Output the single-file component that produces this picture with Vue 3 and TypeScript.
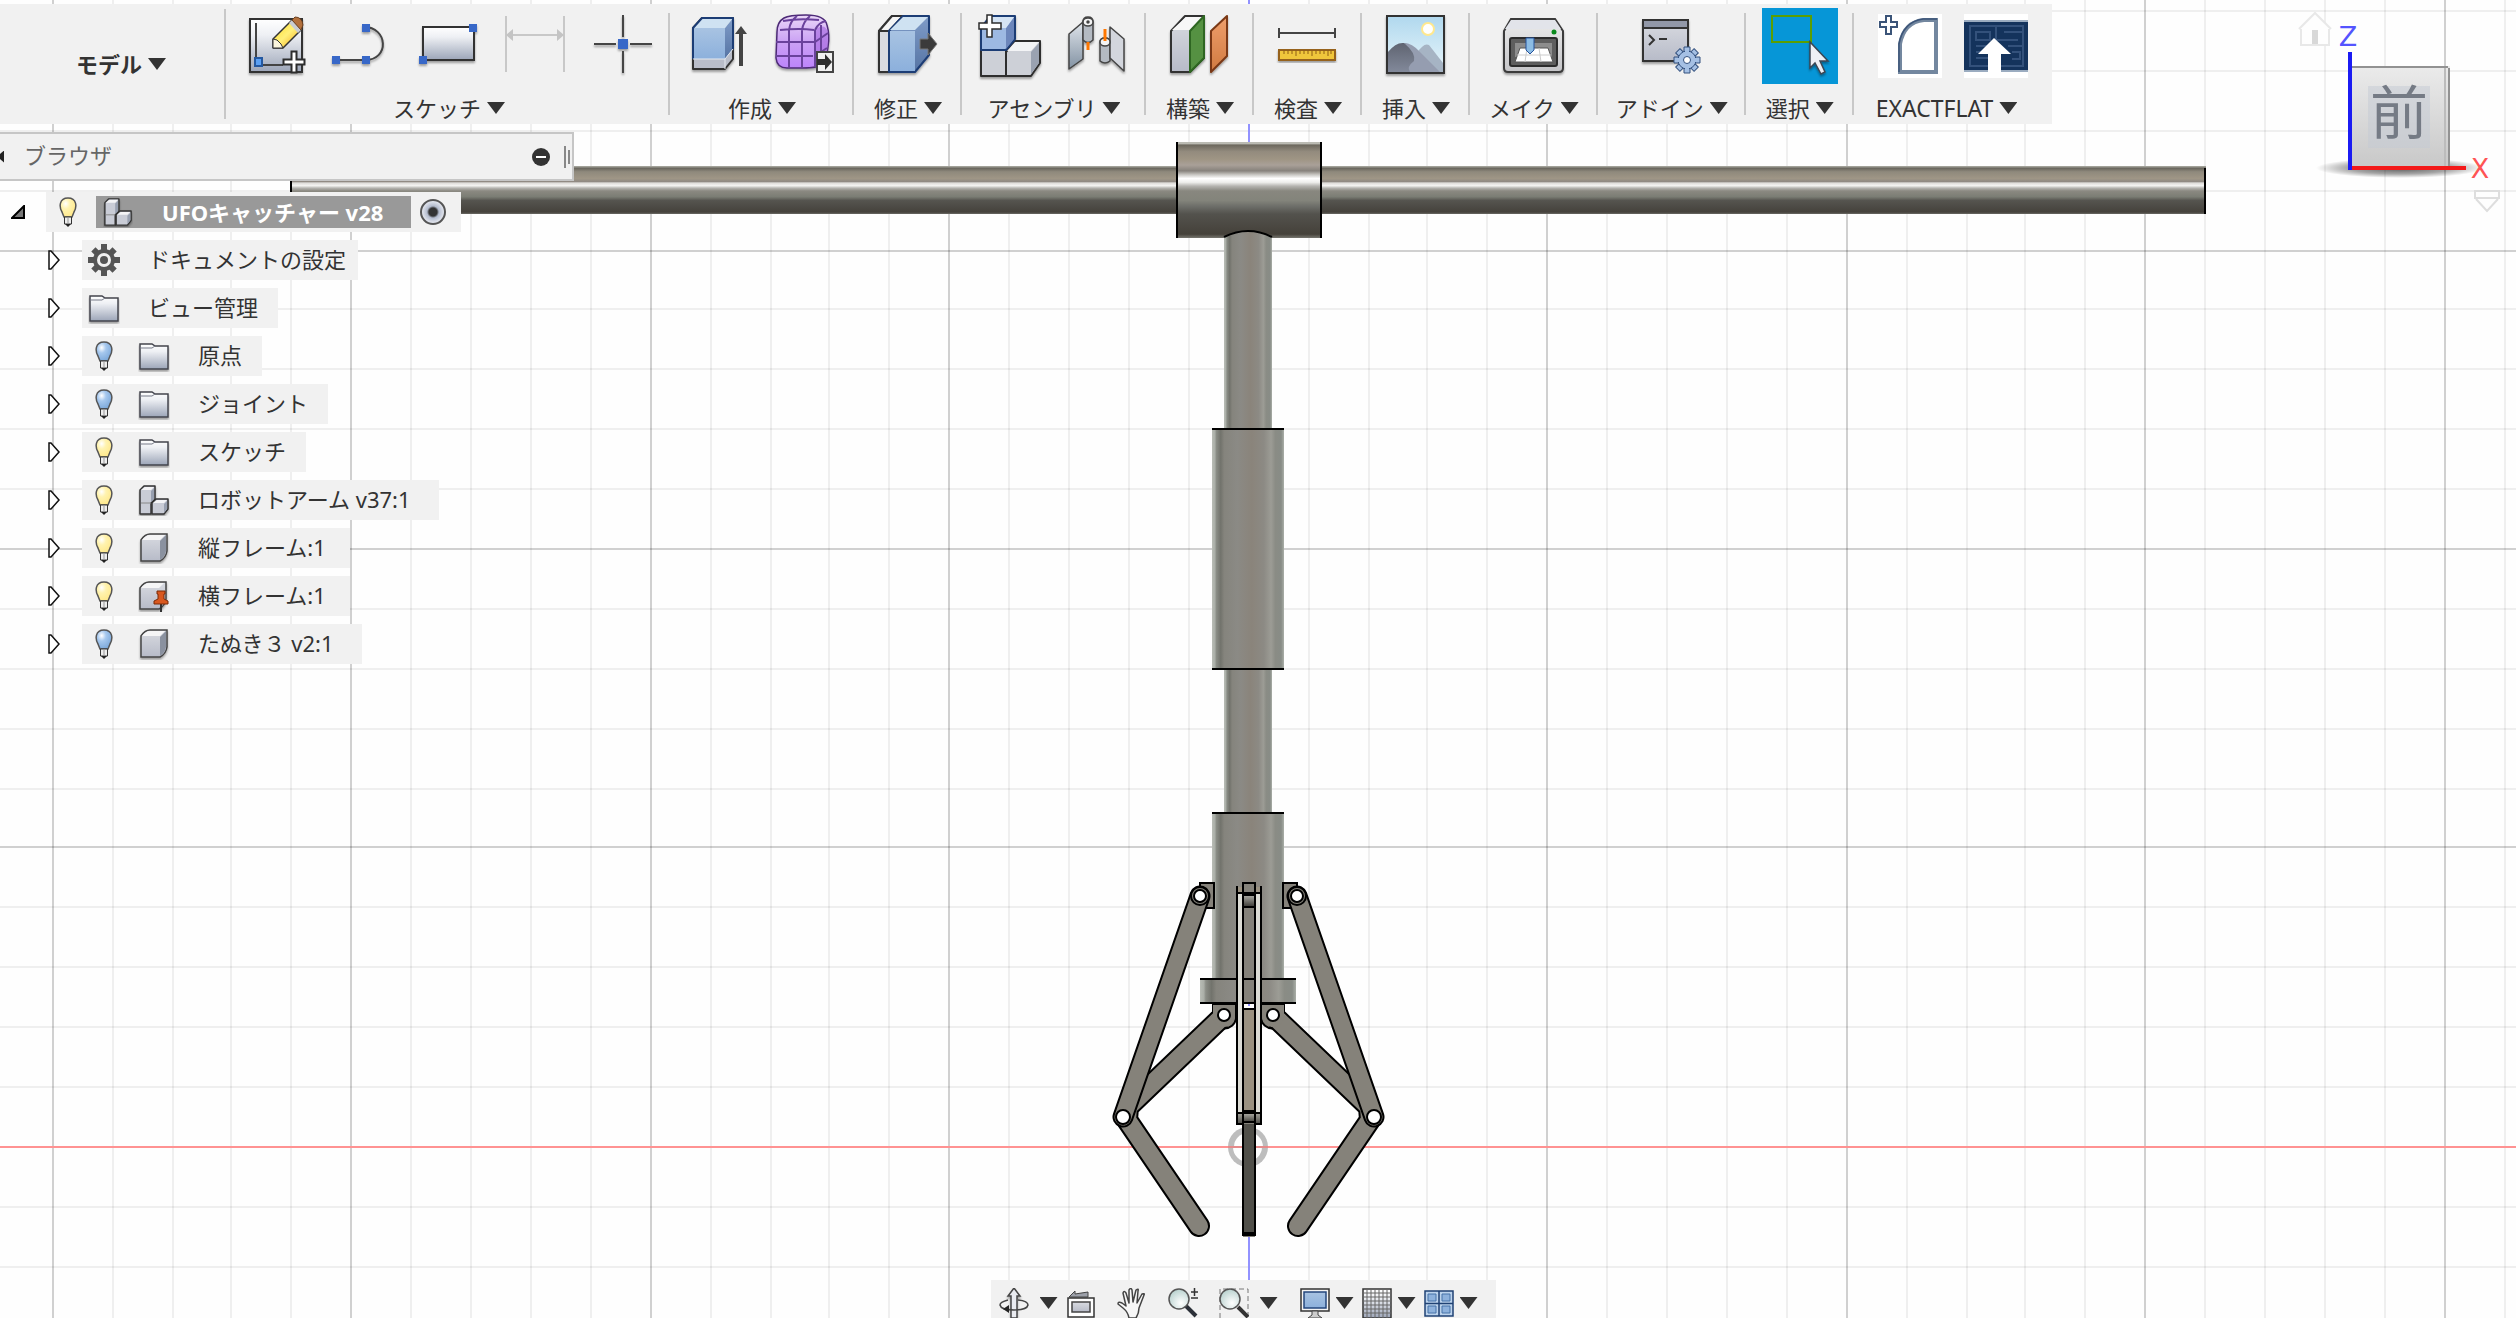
<script setup lang="ts">
interface ToolGroup {
  id: string
  label: string
  icons: { name: string; title: string; active?: boolean }[]
}

interface TreeNode {
  label: string
  bulb?: 'on' | 'off'
  icon: string
}

const groups: ToolGroup[] = [
  {
    id: 'sketch',
    label: 'スケッチ',
    icons: [
      { name: 'new-sketch', title: 'スケッチを作成' },
      { name: 'line', title: '線分' },
      { name: 'rectangle', title: '長方形' },
      { name: 'dimension', title: 'スケッチ寸法' },
      { name: 'point', title: '点' },
    ],
  },
  {
    id: 'create',
    label: '作成',
    icons: [
      { name: 'extrude', title: '押し出し' },
      { name: 'form', title: 'フォームを作成' },
    ],
  },
  { id: 'modify', label: '修正', icons: [{ name: 'press-pull', title: 'プレス/プル' }] },
  {
    id: 'assemble',
    label: 'アセンブリ',
    icons: [
      { name: 'new-component', title: '新規コンポーネント' },
      { name: 'joint', title: 'ジョイント' },
    ],
  },
  { id: 'construct', label: '構築', icons: [{ name: 'plane', title: 'オフセット平面' }] },
  { id: 'inspect', label: '検査', icons: [{ name: 'measure', title: '計測' }] },
  { id: 'insert', label: '挿入', icons: [{ name: 'decal', title: 'デカール' }] },
  { id: 'make', label: 'メイク', icons: [{ name: 'print', title: '3Dプリント' }] },
  { id: 'addin', label: 'アドイン', icons: [{ name: 'script', title: 'スクリプトとアドイン' }] },
  { id: 'select', label: '選択', icons: [{ name: 'select', title: '選択', active: true }] },
  {
    id: 'exactflat',
    label: 'EXACTFLAT',
    icons: [
      { name: 'flat-new', title: 'New pattern' },
      { name: 'flat-export', title: 'Export pattern' },
    ],
  },
]

const nodes: TreeNode[] = [
  { label: 'ドキュメントの設定', icon: 'gear' },
  { label: 'ビュー管理', icon: 'folder' },
  { label: '原点', bulb: 'off', icon: 'folder' },
  { label: 'ジョイント', bulb: 'off', icon: 'folder' },
  { label: 'スケッチ', bulb: 'on', icon: 'folder' },
  { label: 'ロボットアーム v37:1', bulb: 'on', icon: 'assembly' },
  { label: '縦フレーム:1', bulb: 'on', icon: 'body' },
  { label: '横フレーム:1', bulb: 'on', icon: 'pinned' },
  { label: 'たぬき３ v2:1', bulb: 'off', icon: 'body' },
]

const navTools = [
  { name: 'orbit', title: 'オービット', menu: true, id: 'orbit' },
  { name: 'look-at', title: 'ビュー正面', menu: false, id: 'look' },
  { name: 'pan', title: '画面移動', menu: false, id: 'pan' },
  { name: 'zoom', title: 'ズーム', menu: false, id: 'zoom' },
  { name: 'zoom-window', title: '窓ズーム', menu: true, id: 'fit' },
  { name: 'display', title: '表示設定', menu: true, id: 'display' },
  { name: 'grid', title: 'グリッドとスナップ', menu: true, id: 'grid' },
  { name: 'viewports', title: 'ビューポート', menu: true, id: 'views' },
]

// The ground grid repeats every ten cells; every fifth line is a major one.
const cellOffsets = [0, 60, 120, 178, 238, 298, 358, 418, 478, 538]
const columns = [53, 651, 1249, 1847, 2445].flatMap((start) =>
  cellOffsets.map((offset, i) => ({ at: start + offset, major: i % 5 === 0 })),
).filter((c) => c.at < 2516 && c.at !== 1249)
const rows = [
  11, 71, 131, 191, 251, 309, 369, 429, 489, 549, 609, 669, 729, 789, 847, 907, 967, 1027, 1087, 1207, 1267,
].map((at) => ({ at, major: at === 251 || at === 549 || at === 847 }))
</script>

<template>
  <div class="app">
    <svg class="defs" width="0" height="0" aria-hidden="true">
      <defs>
        <linearGradient id="g-paper" x1="0" y1="0" x2="0" y2="1"><stop offset="0" stop-color="#fff" /><stop offset=".3" stop-color="#eef0f4" /><stop offset="1" stop-color="#9ca5b8" /></linearGradient>
        <linearGradient id="g-grey" x1="0" y1="0" x2="0" y2="1"><stop offset="0" stop-color="#d9dbe1" /><stop offset="1" stop-color="#b7bbc8" /></linearGradient>
        <linearGradient id="g-blue" x1="0" y1="0" x2="0" y2="1"><stop offset="0" stop-color="#a8c3e2" /><stop offset="1" stop-color="#8cb0dc" /></linearGradient>
        <linearGradient id="g-side" x1="0" y1="0" x2="0" y2="1"><stop offset="0" stop-color="#7f9cc8" /><stop offset="1" stop-color="#5674a4" /></linearGradient>
        <linearGradient id="g-purple" x1="0" y1="0" x2="0" y2="1"><stop offset="0" stop-color="#ead7f8" /><stop offset=".5" stop-color="#cba2f4" /><stop offset="1" stop-color="#bd84fb" /></linearGradient>
        <linearGradient id="g-steel" x1="0" y1="0" x2="0" y2="1"><stop offset="0" stop-color="#dfe4ea" /><stop offset="1" stop-color="#8292a3" /></linearGradient>
        <linearGradient id="g-orange" x1="0" y1="0" x2="0" y2="1"><stop offset="0" stop-color="#ef9f6c" /><stop offset="1" stop-color="#d07a41" /></linearGradient>
        <linearGradient id="g-sky" x1="0" y1="0" x2="0" y2="1"><stop offset="0" stop-color="#b0d8ee" /><stop offset="1" stop-color="#e9f6fb" /></linearGradient>
        <linearGradient id="g-hill" x1="0" y1="0" x2="0" y2="1"><stop offset="0" stop-color="#5f6471" /><stop offset="1" stop-color="#82899a" /></linearGradient>
        <linearGradient id="g-pencil" x1="0" y1="0" x2="1" y2="1"><stop offset="0" stop-color="#ffd817" /><stop offset=".5" stop-color="#fff07a" /><stop offset="1" stop-color="#f29f05" /></linearGradient>
        <linearGradient id="g-case" x1="0" y1="0" x2="0" y2="1"><stop offset="0" stop-color="#ececec" /><stop offset="1" stop-color="#c5c5c8" /></linearGradient>
        <radialGradient id="g-on" cx=".35" cy=".3" r=".7"><stop offset="0" stop-color="#fff" /><stop offset=".4" stop-color="#fff3b0" /><stop offset="1" stop-color="#ffe98c" /></radialGradient>
        <radialGradient id="g-off" cx=".35" cy=".3" r=".7"><stop offset="0" stop-color="#fff" /><stop offset=".4" stop-color="#a6c8ee" /><stop offset="1" stop-color="#7eaadb" /></radialGradient>
        <radialGradient id="g-lens" cx=".6" cy=".7" r=".7"><stop offset="0" stop-color="#fff" /><stop offset="1" stop-color="#b9d2cf" /></radialGradient>
        <filter id="f-drop" x="-20%" y="-20%" width="140%" height="150%"><feDropShadow dx="0" dy="2" stdDeviation="1" flood-opacity=".35" /></filter>
      </defs>

      <symbol id="i-new-sketch" viewBox="0 0 76 76">
        <rect x="13" y="11" width="52" height="53" fill="url(#g-paper)" stroke="#333" stroke-width="2" filter="url(#f-drop)" />
        <path d="M19 15v42h27" fill="none" stroke="#444" stroke-width="2" />
        <rect x="18" y="50" width="7" height="8" fill="#5aa0f5" stroke="#2458a0" stroke-width="2" />
        <path d="M36 40v-9l19-19 10 9-19 19z" fill="url(#g-pencil)" stroke="#333" stroke-width="1.5" stroke-linejoin="round" />
        <path d="M36 40v-9l4 1 4 4 2 4z" fill="#fbf5dc" stroke="#333" /><path d="m52 15 9 10 4-4-10-9z" fill="#c9ccd2" />
        <path d="m55 12 3-3q7 0 8 8l-2 5z" fill="#b3703c" stroke="#6a3f1f" />
        <path d="M54.500 43.500h5v8h8v5h-8v8h-5v-8h-8v-5h8z" fill="#fff" stroke="#2d2d2d" stroke-width="2" />
      </symbol>
      <symbol id="i-line" viewBox="0 0 76 76">
        <g filter="url(#f-drop)"><path d="M12 52h29c25 0 23-33-1-33" fill="none" stroke="#444" stroke-width="2" /><path d="M8 48h8v8H8zM38 48h8v8h-8zM38 16h8v8h-8z" fill="#3767c8" /></g>
      </symbol>
      <symbol id="i-rectangle" viewBox="0 0 76 76">
        <g filter="url(#f-drop)"><rect x="12" y="19" width="51" height="33" fill="url(#g-paper)" stroke="#333" stroke-width="2" /><path d="M8 48h8v8H8zM58 16h8v8h-8z" fill="#3767c8" /></g>
      </symbol>
      <symbol id="i-dimension" viewBox="0 0 76 76"><path d="M8 8v56M66 8v56M12 27h50" fill="none" stroke="#c8c8c8" stroke-width="2" /><path d="m8 27 7-6v12zM66 27l-7-6v12z" fill="#c4c4c4" /></symbol>
      <symbol id="i-point" viewBox="0 0 76 76"><g filter="url(#f-drop)"><path d="M9 36h22M45 36h22M38 7v22M38 43v22" stroke="#444" stroke-width="2" /><rect x="33" y="31" width="10" height="10" fill="#3767c8" /></g></symbol>
      <symbol id="i-extrude" viewBox="0 0 76 76">
        <g filter="url(#f-drop)" stroke-linejoin="round"><path d="M12 20v41h32l8-10V10H21z" fill="#b9bdc9" stroke="#333" stroke-width="2" /><path d="M12 20h32v31H12z" fill="url(#g-blue)" /><path d="M44 20 52 10v31l-8 10z" fill="url(#g-side)" /><path d="M12 20 21 10h31l-8 10z" fill="#cfe2f2" /><path d="M12 51V20l9-10h31v31" fill="none" stroke="#1d3c75" stroke-width="2" /><path d="M12 51h32l8-10M44 51v10" fill="none" stroke="#e6eaf0" /></g>
        <path d="M60 58V24" stroke="#444" stroke-width="4" /><path d="m54 26 6-8 6 8z" fill="#444" />
      </symbol>
      <symbol id="i-form" viewBox="0 0 76 76">
        <g filter="url(#f-drop)"><path d="M10 24Q10 14 17 10q5-3 22-3 19 0 21 10 3 10 1 22-1 10-6 17-3 4-20 4H20Q10 60 9 50z" fill="url(#g-purple)" stroke="#4d2b77" stroke-width="1.500" /><path d="M47 22Q58 14 61 24q0 18-3 30l-10 4z" fill="#a86ce0" opacity=".65" /><path d="M9 34h39M9 48h37M13 22q20-2 34 0M22 22v37M35 22v37M48 22v37M16 13q15-3 36-1M22 22q1-9 8-14M35 22q1-8 8-14M48 22q4-8 11-9M48 34l13-9M48 48l12-8M54 17v38" fill="none" stroke="#6a429c" stroke-width="2" /></g>
        <rect x="50" y="44" width="16" height="20" fill="#f1f1f1" stroke="#444" stroke-width="2" /><path d="M50 51h8v-5l7 8-7 8v-5h-8z" fill="#2d2d2d" />
      </symbol>
      <symbol id="i-press-pull" viewBox="0 0 76 76">
        <g filter="url(#f-drop)" stroke-width="2" stroke-linejoin="round"><path d="M9 23 22 8h16L19 23v41H9z" fill="#d9dbe1" stroke="#333" /><path d="M9 23 22 8h11L19 23z" fill="#f5f5f5" stroke="#333" /><path d="M19 23v41h26l14-17V8H33z" fill="url(#g-side)" stroke="#1d3c75" /><path d="M20 23h25v40H20z" fill="url(#g-blue)" /><path d="M20 22 33 9h25L45 22z" fill="#cfe2f2" /></g>
        <path d="M50 31h8v-6l9 11-9 11v-6h-8z" fill="#3b3b3b" stroke="#777" />
      </symbol>
      <symbol id="i-new-component" viewBox="0 0 76 76">
        <g filter="url(#f-drop)" stroke-width="2" stroke-linejoin="round"><path d="M8 42h25v26H8z" fill="#cdd0d7" stroke="#2d2d2d" /><path d="M33 44 42 33h25v22L58 68H33z" fill="#cdd0d7" stroke="#2d2d2d" /><path d="m34 43 8-9h24l-8 9z" fill="#f3f4f6" /><path d="M58 44 66 35v20l-8 11z" fill="#9aa2b1" /><path d="M8 20 17 8h25v23l-9 11H8z" fill="#9db9e2" stroke="#1d3c75" /><path d="M33 20l8-11v22l-8 10z" fill="#6c86bb" /><path d="M9 20 18 9h23l-8 11z" fill="#d5e4f4" /></g>
        <path d="M14 7h5v8h9v6h-9v8h-5v-8H6v-6h8z" fill="#fff" stroke="#2d2d2d" stroke-width="1.500" />
      </symbol>
      <symbol id="i-joint" viewBox="0 0 76 76">
        <g filter="url(#f-drop)" stroke="#444" stroke-width="1.500" stroke-linejoin="round"><path d="m10 26 14-12v37L10 61z" fill="url(#g-steel)" /><path d="M24 14q0-5 5-5t5 5v18q-5 5-10 0z" fill="#b4bac2" /><ellipse cx="29" cy="14" rx="5" ry="4" fill="#f4f4f4" /><circle cx="29" cy="14" r="1" /><path d="M41 34q0-4 5-4t5 4v19q-5 4-10 0z" fill="#b4bac2" /><path d="m51 19 14 12v32L51 50z" fill="#d3d6dd" /><ellipse cx="46" cy="34" rx="5" ry="4" fill="#f4f4f4" /></g>
        <path d="M29 34v8M46 21v12" stroke="#f70" stroke-width="3" />
      </symbol>
      <symbol id="i-plane" viewBox="0 0 76 76">
        <g filter="url(#f-drop)" stroke-width="2" stroke-linejoin="round"><path d="M9 23 23 8h19v42L28 64H9z" fill="url(#g-grey)" stroke="#333" /><path d="M10 22 24 9h17L28 22z" fill="#f7f7f7" /><path d="M28 23 42 8v42L28 64z" fill="#549142" stroke="#2d6620" /><path d="M49 23 65 8v40L49 64z" fill="url(#g-orange)" stroke="#7a3814" /></g>
      </symbol>
      <symbol id="i-measure" viewBox="0 0 76 76"><path d="M9 20v10M65 20v10M9 25h56" fill="none" stroke="#444" stroke-width="2" /><rect x="9" y="42" width="56" height="10" fill="#f0c63a" stroke="#96621b" stroke-width="2" filter="url(#f-drop)" /><path d="M14 42v4M18 42v4M22 42v4M26 42v6M30 42v4M34 42v4M38 42v4M42 42v6M46 42v4M50 42v4M54 42v4M58 42v6M61 42v4" stroke="#8f5e16" /></symbol>
      <symbol id="i-decal" viewBox="0 0 76 76">
        <rect x="9" y="8" width="57" height="57" fill="url(#g-sky)" stroke="#333" stroke-width="2" filter="url(#f-drop)" /><circle cx="50" cy="21" r="6" fill="#fff" stroke="#ffe88e" stroke-width="2" /><path d="M38 46q8-12 13-9l14 18v9H38z" fill="#a6b4c4" /><path d="M10 44q8-10 16-9t13 12l22 17H10z" fill="url(#g-hill)" /><path d="M26 35q8 0 16 9l20 20H32q-4-5 4-11 2-8-10-18" fill="#959db0" />
      </symbol>
      <symbol id="i-print" viewBox="0 0 76 76">
        <g filter="url(#f-drop)"><path d="M15 11h44l8 12v37q0 4-4 4H12q-4 0-4-4V23z" fill="url(#g-case)" stroke="#3a3a3a" stroke-width="2" /><path d="M15 12h44l6 9H9z" fill="#e2e4ea" /></g>
        <rect x="14" y="30" width="47" height="28" rx="2" fill="#5e5e5e" stroke="#2c2c2c" stroke-width="2" /><path d="M19 35h37v14H19z" fill="#8d8d8d" /><path d="m24 40-5 14h38l-5-14z" fill="#fff" stroke="#555" /><path d="M21 47h34M31 40l-2 14M43 40l2 14" stroke="#ccc" /><path d="M30 30h8v12l-4 4-4-4z" fill="#8cbce4" stroke="#24529c" /><circle cx="58" cy="24" r="2.500" fill="#0a8a1c" />
      </symbol>
      <symbol id="i-script" viewBox="0 0 76 76">
        <rect x="9" y="12" width="45" height="41" fill="url(#g-grey)" stroke="#333" stroke-width="2" filter="url(#f-drop)" /><path d="M10 13h43v7H10z" fill="#9298a8" /><path d="M9 20h45" stroke="#333" stroke-width="2" /><path d="m15 27 5 5-5 5M25 31h8" fill="none" stroke="#333" stroke-width="2" />
        <g transform="translate(53 52)"><g fill="#a5c0e4" stroke="#33517f"><path d="M-3-13h6v26h-6zM-13-3h26v6h-26z" /><path d="M-3-13h6v26h-6zM-13-3h26v6h-26z" transform="rotate(45)" /><circle r="9" /></g><path d="M-2-12h4v24h-4zM-12-2h24v4h-24z" fill="#a5c0e4" /><circle r="3.500" fill="#fff" stroke="#33517f" /></g>
      </symbol>
      <symbol id="i-select" viewBox="0 0 76 76"><rect x="10" y="8" width="39" height="26" fill="none" stroke="#5b9e02" stroke-width="2" /><path d="M48 34v26l5-5 6 11 4-2-5-11h8z" fill="#eef0f5" stroke="#3b4653" stroke-width="1.500" filter="url(#f-drop)" /></symbol>
      <symbol id="i-flat-new" viewBox="0 0 76 76"><rect x="6" y="6" width="64" height="64" fill="#fff" /><path d="M64 12v52H28V36q4-22 24-24z" fill="none" stroke="#73879f" stroke-width="4" /><path d="M27 64V36q4-22 24-25h14" fill="none" stroke="#3b5478" stroke-width="1.500" /><path d="M14 8h5v6h6v5h-6v7h-5v-7H8v-5h6z" fill="#fff" stroke="#3b5478" stroke-width="2" /></symbol>
      <symbol id="i-flat-export" viewBox="0 0 76 76"><rect x="6" y="6" width="64" height="64" fill="#fff" /><rect x="6" y="12" width="64" height="52" fill="#14335c" /><path d="M6 13h64M6 63h64" stroke="#9bacc0" stroke-width="2" /><path d="M12 18h53v40H12zM18 24h14v8H18zM38 18v14h22M46 24h18M18 38h12M18 44h8M18 50h14M50 38h15M54 44h8v7h-8" fill="none" stroke="#33517b" stroke-width="2" /><path d="M36 30 53 46H43v20H30V46H20z" fill="#fff" /></symbol>

      <symbol id="i-bulb-on" viewBox="0 0 18 30"><path d="M9 1c9 0 9 9 6 14l-2 5H5l-2-5C0 10 0 1 9 1z" fill="url(#g-on)" stroke="#555" stroke-width="1.500" /><path d="M5.500 20h7v7h-7z" fill="#eee" stroke="#333" /><path d="M9 20v7" stroke="#999" /><path d="M6 27h6l-3 3z" fill="#222" /></symbol>
      <symbol id="i-bulb-off" viewBox="0 0 18 30"><path d="M9 1c9 0 9 9 6 14l-2 5H5l-2-5C0 10 0 1 9 1z" fill="url(#g-off)" stroke="#555" stroke-width="1.500" /><path d="M5.500 20h7v7h-7z" fill="#eee" stroke="#333" /><path d="M9 20v7" stroke="#999" /><path d="M6 27h6l-3 3z" fill="#222" /></symbol>
      <symbol id="i-gear" viewBox="0 0 32 32"><g fill="#555"><path d="M13 0h6v32h-6zM0 13h32v6H0z" /><path d="M13 1h6v30h-6zM1 13h30v6H1z" transform="rotate(45 16 16)" /><circle cx="16" cy="16" r="11" /></g><circle cx="16" cy="16" r="7" fill="#f1f1f1" /><circle cx="16" cy="16" r="4" fill="#555" /></symbol>
      <symbol id="i-folder" viewBox="0 0 32 32"><path d="M2 4h12l3 2h13v23H2z" fill="url(#g-paper)" stroke="#43454d" stroke-width="1.500" filter="url(#f-drop)" /><path d="M2 8h12l3-2" fill="none" stroke="#777b88" /></symbol>
      <symbol id="i-assembly" viewBox="0 0 32 32"><g filter="url(#f-drop)" stroke="#333" stroke-width="1.500" stroke-linejoin="round"><path d="M2 6 6 2h11v13l-4 4v11H2z" fill="#c9ccd6" /><path d="m14 19 4-4h12v10l-4 5H14z" fill="#c9ccd6" /></g><path d="M3 6 7 3h9l-3 3zM15 19l4-3h10l-3 3z" fill="#f4f4f6" /><path d="M13 7l3-3v11l-3 3zM26 20l3-3v8l-3 4z" fill="#98a0b0" /><path d="M3 19h10" stroke="#888" /></symbol>
      <symbol id="i-body" viewBox="0 0 32 32"><path d="M3 8q4-6 9-6h17v17q-1 7-7 10H3z" fill="url(#g-grey)" stroke="#444" stroke-width="1.500" filter="url(#f-drop)" /><path d="M4 8q4-5 8-5h15l-5 5z" fill="#f5f5f6" /><path d="m22 9 6-6v16q-1 6-6 9z" fill="#8a919f" /></symbol>
      <symbol id="i-pinned" viewBox="0 0 32 32"><path d="M2 8q4-6 9-6h17v17q-1 7-7 10H2z" fill="url(#g-grey)" stroke="#444" stroke-width="1.500" filter="url(#f-drop)" /><path d="M3 8q4-5 8-5h15l-5 5z" fill="#f5f5f6" /><path d="M23 24v8" stroke="#333" stroke-width="2" /><path d="M19 11h8v3h-1v5l4 2v3H16v-3l4-2v-5h-1z" fill="#d9581f" stroke="#7a2a08" /></symbol>

      <symbol id="i-orbit" viewBox="0 0 30 30"><g filter="url(#f-drop)"><path d="M12 30V8H9l6-8 6 8h-3v22z" fill="#e9ebf0" stroke="#444" stroke-width="1.500" /></g><path d="M9 12Q1 14 1 17q1 5 14 5t14-5q0-4-10-5" fill="none" stroke="#444" stroke-width="1.500" /><path d="m4 21 6-4v8z" fill="#222" /></symbol>
      <symbol id="i-look-at" viewBox="0 0 30 30"><path d="M3 9 9 3v3l13-2v5z" fill="#9da1aa" stroke="#444" /><rect x="2" y="10" width="26" height="19" fill="#fff" stroke="#333" stroke-width="1.500" /><rect x="6" y="14" width="18" height="10" fill="url(#g-grey)" stroke="#444" stroke-width="1.500" /></symbol>
      <symbol id="i-pan" viewBox="0 0 30 30"><path d="M12 30q-1-6-6-10l-5-4q0-3 4-1l4 3-3-13q1-3 3 0l3 10V2q2-3 3 0l1 12 3-12q3-2 2 1l-1 12 5-9q3-1 2 1l-5 13q0 5-3 10z" fill="#f7f7f7" stroke="#444" stroke-width="1.500" stroke-linejoin="round" /></symbol>
      <symbol id="i-zoom" viewBox="0 0 30 30"><path d="m18 18 10 10" stroke="#2b3038" stroke-width="4" /><circle cx="11" cy="11" r="10" fill="url(#g-lens)" stroke="#555" stroke-width="1.500" /><path d="M23 4h7M26.500 0v8M23 10h7" stroke="#333" stroke-width="1.500" /></symbol>
      <symbol id="i-zoom-window" viewBox="0 0 30 30"><path d="M1 30V1h28v29" fill="none" stroke="#777" stroke-dasharray="5 3" /><path d="m19 19 10 10" stroke="#333" stroke-width="4" /><circle cx="11" cy="11" r="10" fill="url(#g-lens)" stroke="#555" stroke-width="1.500" /></symbol>
      <symbol id="i-display" viewBox="0 0 30 30"><path d="M1 1h28v22H1z" fill="#f4f4f4" stroke="#333" stroke-width="1.500" /><path d="M4 4h22v16H4z" fill="url(#g-blue)" stroke="#24477e" stroke-width="1.500" /><path d="M12 23h6v4l4 3H8l4-3z" fill="#ccc" stroke="#444" /></symbol>
      <symbol id="i-grid" viewBox="0 0 30 30"><rect x="1" y="1" width="28" height="29" fill="url(#g-paper)" stroke="#333" stroke-width="1.500" /><path d="M5 1v29M9 1v29M13 1v29M17 1v29M21 1v29M25 1v29M1 5h28M1 9h28M1 13h28M1 17h28M1 21h28M1 25h28" stroke="#666" /></symbol>
      <symbol id="i-viewports" viewBox="0 0 30 30"><path d="M1 3h28v25H1z" fill="#bcd3ec" stroke="#1f4274" stroke-width="1.500" /><path d="M15 3v25M1 15.500h28" stroke="#1f4274" stroke-width="1.500" /><path d="M4 6h8v7H4zM18 6h8v7h-8zM4 18h8v7H4zM18 18h8v7h-8z" fill="#8db1dc" stroke="#4773a8" /></symbol>
    </svg>

    <!-- Modelling canvas -->
    <svg class="canvas" viewBox="0 0 2516 1318" preserveAspectRatio="xMidYMid slice" role="img" aria-label="モデル">
      <defs>
        <linearGradient id="m-beam" x1="0" y1="0" x2="0" y2="1">
          <stop offset="0" stop-color="#b0b0a8" /><stop offset=".05" stop-color="#6b685f" /><stop offset=".12" stop-color="#8f897c" /><stop offset=".26" stop-color="#9f9686" /><stop offset=".33" stop-color="#8f8983" /><stop offset=".35" stop-color="#dddbd8" /><stop offset=".41" stop-color="#f4f4f2" /><stop offset=".46" stop-color="#b5b4b0" /><stop offset=".52" stop-color="#8b8981" /><stop offset=".64" stop-color="#7b7d74" /><stop offset=".72" stop-color="#55544f" /><stop offset=".96" stop-color="#45423c" /><stop offset="1" stop-color="#6b6a65" />
        </linearGradient>
        <linearGradient id="m-hub" x1="0" y1="0" x2="0" y2="1">
          <stop offset="0" stop-color="#babab2" /><stop offset=".02" stop-color="#babab2" /><stop offset=".03" stop-color="#6b675c" /><stop offset=".1" stop-color="#938b7e" /><stop offset=".18" stop-color="#9f9584" /><stop offset=".24" stop-color="#a9a098" /><stop offset=".3" stop-color="#87827c" /><stop offset=".34" stop-color="#c8c6c2" /><stop offset=".38" stop-color="#fff" /><stop offset=".42" stop-color="#eeeeec" /><stop offset=".46" stop-color="#b4b3af" /><stop offset=".51" stop-color="#88877f" /><stop offset=".61" stop-color="#83847b" /><stop offset=".67" stop-color="#6d6e69" /><stop offset=".75" stop-color="#53524d" /><stop offset=".96" stop-color="#45413a" /><stop offset="1" stop-color="#77766f" />
        </linearGradient>
        <linearGradient id="m-shaft" x1="0" y1="0" x2="1" y2="0">
          <stop offset="0" stop-color="#b9bdb6" /><stop offset=".04" stop-color="#aaaea7" /><stop offset=".06" stop-color="#8a8d86" /><stop offset=".12" stop-color="#72736c" /><stop offset=".17" stop-color="#85847d" /><stop offset=".35" stop-color="#8b8a85" /><stop offset=".55" stop-color="#8a847b" /><stop offset=".72" stop-color="#8c8a84" /><stop offset=".82" stop-color="#9c9c95" /><stop offset=".88" stop-color="#8a8c85" /><stop offset=".96" stop-color="#888c86" /><stop offset="1" stop-color="#aaafa8" />
        </linearGradient>
        <linearGradient id="m-pin" x1="0" y1="0" x2="0" y2="1"><stop offset="0" stop-color="#a5a49d" /><stop offset="1" stop-color="#42413c" /></linearGradient>
        <g id="claw">
          <path d="M1200 883h14v25h-14z" fill="#85827a" stroke="#000" stroke-width="2" />
          <path d="M1213 1004v12a11 11 0 0 0 23 2v-14z" fill="#85827a" stroke="#000" stroke-width="2" />
          <g fill="none" stroke-linecap="round" stroke-linejoin="round">
            <path d="M1219 1020 1128 1107l-1 13 72 106" stroke="#000" stroke-width="22" />
            <path d="M1219 1020 1128 1107l-1 13 72 106" stroke="#85827a" stroke-width="18" />
            <path d="M1200 896 1123 1117" stroke="#000" stroke-width="21" />
            <path d="M1200 896 1123 1117" stroke="#85827a" stroke-width="17" />
          </g>
          <path d="M1213 1005v10a11 11 0 0 0 22 2v-12z" fill="#85827a" />
          <g fill="#fff" stroke="#000" stroke-width="2"><circle cx="1200" cy="896" r="9" fill="none" /><circle cx="1200" cy="896" r="6" /><circle cx="1224" cy="1015" r="6" /><circle cx="1123" cy="1117" r="7" /></g>
        </g>
      </defs>
      <rect width="2516" height="1318" fill="#fefefe" />
      <g stroke="#000" stroke-width="2">
        <line v-for="c in columns" :key="`c${c.at}`" :x1="c.at" :x2="c.at" y1="0" y2="1318" :stroke-opacity="c.major ? 0.18 : 0.06" />
        <line v-for="r in rows" :key="`r${r.at}`" x1="0" x2="2516" :y1="r.at" :y2="r.at" :stroke-opacity="r.major ? 0.18 : 0.06" />
      </g>
      <path d="M0 1147h2516" stroke="#ff9292" stroke-width="2" />
      <path d="M1249 0v1318" stroke="#9292ff" stroke-width="2" />
      <circle cx="1248" cy="1147" r="20" fill="#bdbdbd" />
      <path d="M1248 1147v-15a15 15 0 0 1 15 15zM1248 1147v15a15 15 0 0 1-15-15z" fill="#fefefe" />
      <circle cx="1248" cy="1147" r="14" fill="#fefefe" />
      <path d="M1228 1147h40" stroke="#e58a8a" stroke-width="2" />

      <rect x="290" y="166" width="1916" height="48" fill="url(#m-beam)" />
      <path d="M291 167v47M2205 168v46" stroke="#000" stroke-width="2" />
      <rect x="1176" y="142" width="146" height="96" fill="url(#m-hub)" />
      <path d="M1177 142v96M1321 142v96" stroke="#000" stroke-width="2" />
      <path d="M1224 237q24-12 48 0v576h-48z" fill="url(#m-shaft)" />
      <path d="M1224 237q24-12 48 0" fill="none" stroke="#000" stroke-width="2" />
      <rect x="1212" y="429" width="72" height="240" fill="url(#m-shaft)" />
      <rect x="1212" y="813" width="72" height="166" fill="url(#m-shaft)" />
      <rect x="1200" y="979" width="96" height="24" fill="url(#m-shaft)" />
      <path d="M1212 429h72M1212 669h72M1212 813h72M1200 979h96M1200 1003h96" stroke="#000" stroke-width="2" />
      <use href="#claw" />
      <use href="#claw" transform="matrix(-1 0 0 1 2497 0)" />

      <rect x="1237" y="887" width="24" height="6" fill="#9b9281" />
      <rect x="1237" y="893" width="24" height="220" fill="#dcdcd5" />
      <rect x="1237" y="1113" width="24" height="12" fill="url(#m-pin)" />
      <rect x="1243" y="883" width="12" height="354" fill="#85827a" />
      <rect x="1243" y="892" width="12" height="3" fill="#eee" />
      <rect x="1243" y="896" width="12" height="10" fill="url(#m-pin)" />
      <rect x="1243" y="1004" width="12" height="4" fill="#fff" />
      <path d="M1248 1005h2" stroke="#9292ff" stroke-width="2" />
      <rect x="1243" y="1010" width="12" height="101" fill="#9b9281" />
      <rect x="1243" y="1114" width="12" height="8" fill="url(#m-pin)" />
      <rect x="1243" y="1124" width="12" height="112" fill="#504f49" />
      <path d="M1237 886v239M1261 886v239M1243 882v354M1255 882v354M1243 883h12M1237 893h24M1243 895h12M1243 907h12M1243 979h12M1243 1003h12M1243 1009h12M1243 1111h12M1237 1113h24M1237 1124h6M1255 1124h6M1243 1122h12M1243 1233h12M1242 1235h14" fill="none" stroke="#000" stroke-width="2" />
    </svg>

    <header class="toolbar">
      <button class="workspace" type="button">モデル<span class="caret"></span></button>
      <section v-for="g in groups" :key="g.id" class="group" :class="`group-${g.id}`">
        <div class="icons">
          <button v-for="i in g.icons" :key="i.name" type="button" class="tool" :class="{ active: i.active }" :title="i.title" :aria-label="i.title">
            <svg width="76" height="76"><use :href="`#i-${i.name}`" /></svg>
          </button>
        </div>
        <button type="button" class="menu">{{ g.label }}<span class="caret"></span></button>
      </section>
    </header>

    <!-- View cube -->
    <svg class="cube" width="220" height="220" viewBox="0 0 220 220" role="img" aria-label="前">
      <defs>
        <linearGradient id="c-face" x1="0" y1="0" x2="0" y2="1"><stop offset="0" stop-color="#ebebeb" /><stop offset="1" stop-color="#c8c8c8" /></linearGradient>
        <radialGradient id="c-shadow"><stop offset="0" stop-opacity=".65" /><stop offset=".6" stop-opacity=".35" /><stop offset="1" stop-opacity="0" /></radialGradient>
      </defs>
      <path d="m3 29 16-16 16 16M5 29v16h28V29" fill="#fefefe" stroke="#e8e8e8" stroke-width="2" /><path d="M16 30h6v14h-6z" fill="#d8d8d8" />
      <ellipse cx="104" cy="168" rx="84" ry="10" fill="url(#c-shadow)" />
      <rect x="54" y="66" width="100" height="102" fill="url(#c-face)" />
      <path d="M54 67h98M153 68v98" stroke="#929292" stroke-width="2" />
      <path d="M149 68v98" stroke="#bcbcbc" stroke-width="2" />
      <rect x="72" y="86" width="62" height="62" fill="#c4c9d4" opacity=".5" />
      <text x="103" y="134" class="face" text-anchor="middle">前</text>
      <path d="M54 168h116" stroke="#f31919" stroke-width="4" /><path d="M54 52v118" stroke="#1b1bf3" stroke-width="4" />
      <text x="52" y="46" class="axis z" text-anchor="middle">Z</text>
      <text x="184" y="178" class="axis x" text-anchor="middle">X</text>
      <path d="M179 191h24v7h-24zM180 199l11 12 11-12" fill="#fefefe" stroke="#dedede" stroke-width="2" />
    </svg>

    <aside class="browser">
      <div class="browser-head">
        <span class="collapse"></span>
        <h2>ブラウザ</h2>
        <button type="button" class="minus" aria-label="最小化"></button>
        <span class="grip"></span>
      </div>
      <ul class="tree">
        <li class="row root">
          <svg class="open" width="14" height="14" viewBox="0 0 14 14"><path d="M1 13 13 1v12z" fill="#777" stroke="#000" stroke-width="2" /></svg>
          <div class="chip">
            <svg class="bulb" width="18" height="30"><use href="#i-bulb-on" /></svg>
            <span class="selected"><svg width="30" height="30"><use href="#i-assembly" /></svg><b>UFOキャッチャー v28</b></span>
            <input class="activate" type="radio" name="active" checked aria-label="コンポーネントをアクティブ化" />
          </div>
        </li>
        <li v-for="n in nodes" :key="n.label" class="row">
          <svg class="closed" width="14" height="20" viewBox="0 0 14 20"><path d="M2 1h2l8 9-8 9H2z" fill="#fff" stroke="#111" stroke-width="1.500" /></svg>
          <div class="chip" :class="{ settings: n.icon === 'gear', versioned: n.label.includes(' v'), instance: n.label.endsWith(':1') }">
            <svg v-if="n.bulb" class="bulb" width="18" height="30"><use :href="`#i-bulb-${n.bulb}`" /></svg>
            <svg class="kind" width="32" height="32"><use :href="`#i-${n.icon}`" /></svg>
            <span class="name">{{ n.label }}</span>
          </div>
        </li>
      </ul>
    </aside>

    <nav class="navbar">
      <button v-for="t in navTools" :key="t.id" type="button" :class="['nav', `nav-${t.id}`]" :title="t.title" :aria-label="t.title">
        <svg width="30" height="30"><use :href="`#i-${t.name}`" /></svg>
        <span v-if="t.menu" class="caret"></span>
      </button>
    </nav>
  </div>
</template>

<style>
body {
  margin: 0;
  overflow: hidden;
}
</style>

<style scoped>
.app {
  position: relative;
  display: flex;
  flex-direction: column;
  align-items: flex-start;
  height: 100vh;
  overflow: hidden;
  font-family: "Noto Sans", "Noto Sans CJK JP", sans-serif;
  font-size: 22px;
  line-height: 24px;
  color: #333;
}
.defs {
  position: absolute;
}
.canvas {
  position: absolute;
  inset: 0;
  width: 100%;
  height: 100%;
}
button {
  margin: 0;
  padding: 0;
  border: 0;
  background: none;
  font: inherit;
  color: inherit;
}
svg {
  display: block;
  flex: none;
}
.caret {
  flex: none;
  width: 18px;
  height: 12px;
  background: #333;
  clip-path: polygon(0 0, 100% 0, 50% 100%);
}

.toolbar {
  position: relative;
  display: flex;
  align-items: center;
  height: 120px;
  margin-top: 4px;
  background: #f1f1f1;
  white-space: nowrap;
}
.workspace {
  display: flex;
  align-items: center;
  gap: 6px;
  height: 110px;
  padding: 0 58px 0 76px;
  border-right: 2px solid #c8c8c8;
  font-weight: 700;
}
.group {
  position: relative;
  display: flex;
  flex-direction: column;
  align-items: center;
  gap: 12px;
  height: 112px;
  padding: 0 11px;
}
.group::after {
  content: "";
  position: absolute;
  right: 0;
  top: 5px;
  width: 2px;
  height: 102px;
  background: #c8c8c8;
}
.icons {
  display: flex;
  gap: 10px;
}
.tool {
  width: 76px;
  height: 76px;
}
.tool.active {
  background: #0696d7;
}
.menu {
  display: flex;
  align-items: center;
  gap: 6px;
  height: 24px;
  padding: 0 9px;
}
.group-sketch {
  padding: 0 9px 0 11px;
}
.group-sketch .icons {
  gap: 11px;
}
.group-make .menu {
  padding: 0 8px;
}
.group-addin .menu {
  padding: 0 7px;
}
.group-exactflat {
  padding: 0 18px;
}
.group-exactflat .menu {
  align-self: flex-start;
  padding: 0 4px;
  font-size: 23px;
}
.group-exactflat::after {
  display: none;
}

.cube {
  position: absolute;
  top: 0;
  right: 0;
}
.face {
  font-family: "Noto Sans CJK JP", sans-serif;
  font-size: 58px;
  font-weight: 400;
  fill: #757b85;
}
.axis {
  font-family: "DejaVu Sans", sans-serif;
  font-size: 27px;
}
.z {
  fill: #5454ff;
}
.x {
  fill: #ff5454;
}

.browser {
  position: relative;
  margin-top: 8px;
}
.browser-head {
  display: flex;
  align-items: center;
  box-sizing: border-box;
  width: 574px;
  height: 49px;
  border: 2px solid #c6c6c6;
  border-left: 0;
  background: #f1f1f1;
}
.collapse {
  width: 4px;
  height: 12px;
  background: #222;
  clip-path: polygon(0 30%, 100% 0, 100% 100%, 0 70%);
}
h2 {
  flex: 1;
  margin: 0 0 0 20px;
  padding-bottom: 4px;
  font-size: 22px;
  font-weight: 400;
  color: #666;
}
.minus {
  display: flex;
  align-items: center;
  justify-content: center;
  width: 18px;
  height: 18px;
  border-radius: 50%;
  background: #333;
}
.minus::before {
  content: "";
  width: 10px;
  height: 2px;
  background: #fff;
}
.grip {
  display: flex;
  align-items: center;
  gap: 2px;
  margin: 0 2px 0 14px;
}
.grip::before,
.grip::after {
  content: "";
  width: 2px;
  height: 22px;
  background: #888;
}
.grip::after {
  height: 14px;
}
.tree {
  display: flex;
  flex-direction: column;
  gap: 8px;
  margin: 11px 0 0;
  padding: 0;
  list-style: none;
}
.row {
  display: flex;
  align-items: center;
  height: 40px;
  white-space: nowrap;
}
.chip {
  display: flex;
  align-items: center;
  height: 40px;
  padding: 0 20px 0 13px;
  background: #f1f1f1;
}
.open {
  margin: 0 21px 0 11px;
}
.closed {
  margin: 0 21px 0 47px;
}
.kind {
  margin: 0 28px 0 -7px;
}
.bulb + .kind {
  margin: 0 28px 0 25px;
}
.name {
  padding-bottom: 2px;
}
.settings {
  padding-right: 12px;
}
.instance {
  padding-right: 24px;
}
.versioned {
  padding-right: 28px;
}
.root .chip {
  padding-right: 15px;
}
.selected {
  display: flex;
  align-items: center;
  gap: 29px;
  height: 32px;
  margin: 0 9px 0 19px;
  padding: 0 28px 0 7px;
  background: #999;
  color: #fff;
}
.activate {
  appearance: none;
  width: 26px;
  height: 26px;
  margin: 0;
  border: 2px solid #555;
  border-radius: 50%;
  background: radial-gradient(circle, #333 0 4px, #b4bcce 6px, #eceef4 12px);
}

.navbar {
  position: relative;
  display: flex;
  align-items: flex-start;
  align-self: center;
  box-sizing: border-box;
  height: 38px;
  margin: auto 30px 0 0;
  padding: 8px 18px 0 8px;
  background: #f1f1f1;
}
.nav {
  display: flex;
  align-items: center;
  gap: 6px;
  margin-right: 8px;
}
.nav-orbit,
.nav-fit {
  gap: 11px;
}
.nav-look,
.nav-pan,
.nav-zoom {
  margin-right: 21px;
}
.nav-fit {
  margin-right: 22px;
}
.nav-views {
  margin-right: 0;
}
</style>
